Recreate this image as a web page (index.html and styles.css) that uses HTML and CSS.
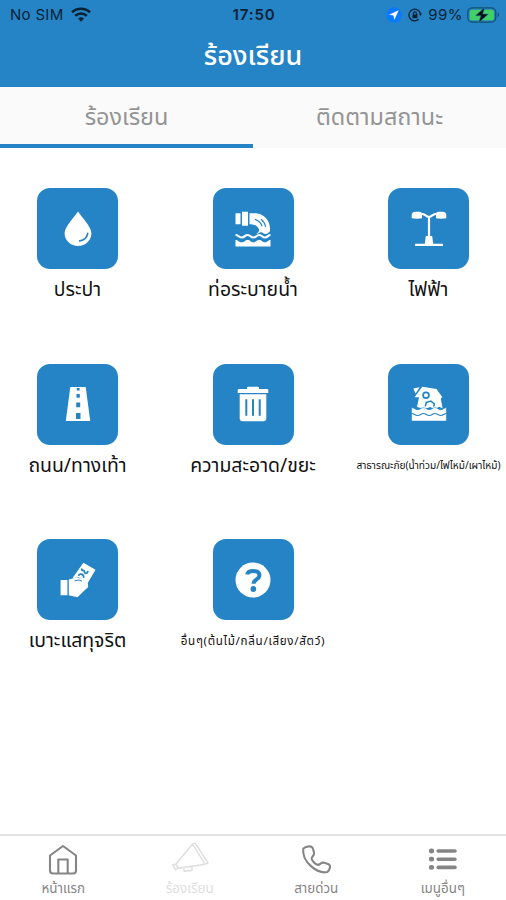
FILE: index.html
```html
<!DOCTYPE html>
<html lang="th">
<head>
  <meta charset="UTF-8">
  <meta name="viewport" content="width=device-width, initial-scale=1.0">
  <title>ร้องเรียน</title>
  <link rel="stylesheet" href="styles.css">
</head>
<body>
  <header class="header">
    <div class="status-bar">
      <div class="status-left">
        <span>No SIM</span>
        <svg width="20" height="15" viewBox="0 0 20 15" fill="none" stroke="#0b2234" stroke-width="2.6">
          <path d="M1 5.3a13 13 0 0 1 18 0M4.2 8.9a8.3 8.3 0 0 1 11.6 0"/>
          <path d="M7 11.6a4.5 4.5 0 0 1 6 0L10 14.8z" fill="#0b2234" stroke="none"/>
        </svg>
      </div>
      <span class="clock">17:50</span>
      <div class="status-right">
        <svg width="16" height="16" viewBox="0 0 16 16"><circle cx="8" cy="8" r="7.7" fill="#0a78ff"/><path d="M12.7 3.3L3 7.7l4.5.8.8 4.6z" fill="#fff"/></svg>
        <svg class="lock" width="14" height="14" viewBox="0 0 14 14" fill="none" stroke="#0b2234" stroke-width="1.3">
          <path d="M10.7 11.3A5.8 5.8 0 1 1 12.5 6"/><path d="M10.8 5.5h3.1l-1.4 2.7z" fill="#0b2234" stroke="none"/>
          <path d="M4.5 6.5h5v3.7h-5z" fill="#0b2234" stroke="none"/><path d="M5.5 7V5.4a1.5 1.5 0 0 1 3 0V7"/>
        </svg>
        <span class="percent">99%</span>
        <svg width="33" height="16" viewBox="0 0 33 16">
          <rect x=".8" y=".8" width="28" height="14.4" rx="4.4" fill="none" stroke="#174e72" stroke-width="1.3"/>
          <rect x="2.7" y="2.7" width="24.2" height="10.6" rx="2.6" fill="#42cf63"/>
          <path d="M30.7 5.8c1.8.6 1.8 3.8 0 4.4z" fill="#174e72"/>
          <path d="M17.8.3L8.4 8.7h5.3l-2 7L21.5 7h-5.7z" fill="#071018" stroke="#238ac0" stroke-width=".5"/>
        </svg>
      </div>
    </div>
    <h1>ร้องเรียน</h1>
  </header>

  <nav class="tabs">
    <a class="tab active">ร้องเรียน</a>
    <a class="tab">ติดตามสถานะ</a>
  </nav>

  <main class="menu-grid">
    <div class="menu-item">
      <div class="tile">
        <svg viewBox="0 0 36 36" fill="#fff"><path d="M18 .5C15 5.5 4.6 15.4 4.6 22.2a13.4 12.8 0 0 0 26.8 0C31.4 15.4 21 5.5 18 .5z"/><path d="M27.7 22.4c-.7 4.2-3.3 6.8-8 7.5" fill="none" stroke="#2584c6" stroke-width="1.7" stroke-linecap="round"/></svg>
      </div>
      <p>ประปา</p>
    </div>
    <div class="menu-item">
      <div class="tile">
        <svg viewBox="0 0 36 36" fill="#fff">
          <path d="M.5 2.2h5v11h-5zM7 .8h6v14H7zM14.5 2.2h6.3C29 3 34.8 9 35 17.5v2.7c-1.2 1-2.5 2.7-4.3 2.7-2.2 0-3-1.5-4.5-1.7-2.1-.2-2.5 1.8-4.8 1.4 3-1.5 3.2-3.3 2.2-5.1-1.5-3-4.3-4.2-9.1-4.3z"/>
          <path d="M20 8.4c4 1.2 6.2 3.7 7 7M26 8.2c2.2 1.7 4 4.3 4.8 7.8" fill="none" stroke="#2584c6" stroke-width="1.1"/>
          <path d="M.5 24c3.1 0 3.1 2.5 6.2 2.5S9.8 24 12.6 24s3 2.5 5.8 2.5 3-2.5 5.8-2.5 3 2.5 5.8 2.5 3-2.5 5.5-2.5" fill="none" stroke="#fff" stroke-width="2.2"/>
          <path d="M.5 29c3 0 3 2.3 6.2 2.3S9.8 29 12.6 29s3 2.3 5.8 2.3 3-2.3 5.8-2.3 3 2.3 5.8 2.3 3-2.3 5.5-2.3v6.6H.5z"/>
        </svg>
      </div>
      <p>ท่อระบายน้ำ</p>
    </div>
    <div class="menu-item">
      <div class="tile">
        <svg viewBox="0 0 36 36" fill="#fff"><path d="M.7 7.3V4Q1 .7 4.5.7h4Q11 .7 11 3v4.3q-5 .8-10.3 0zM35.3 7.3V4Q35 .7 31.5.7h-4Q25 .7 25 3v4.3q5 .8 10.3 0z"/><path d="M10.5 2.8c3.5 0 4.3 2.7 7.5 3.3 3.2-.6 4-3.3 7.5-3.3M18 5.8V25" fill="none" stroke="#fff" stroke-width="2.2"/><path d="M14.8 25h6.4l1 7.7H32V35H4v-2.3h9.8z"/></svg>
      </div>
      <p>ไฟฟ้า</p>
    </div>
    <div class="menu-item">
      <div class="tile">
        <svg viewBox="0 0 36 36"><path d="M10.3 1h15.4l4.5 34H5.8z" fill="#fff"/><path d="M16.8 1.9h2.8v2.7h-2.8zM16.5 8h3.3v3.7h-3.3zM16.2 16.4h4v4.8h-4zM16 27h4.5v6H16z" fill="#2584c6"/></svg>
      </div>
      <p>ถนน/ทางเท้า</p>
    </div>
    <div class="menu-item">
      <div class="tile">
        <svg viewBox="0 0 36 36"><path d="M12 3V1.8Q12 .7 13.3.7h9.4q1.3 0 1.3 1.1V3h8q1.3 0 1.3 1.3V7H2.7V4.3Q2.7 3 4 3z" fill="#fff"/><path d="M4.7 8.3h26.6v23.9q0 3-3 3H7.7q-3 0-3-3z" fill="#fff"/><path d="M11.3 13.3v16.4M18 13.3v16.4M24.7 13.3v16.4" stroke="#2584c6" stroke-width="2"/></svg>
      </div>
      <p>ความสะอาด/ขยะ</p>
    </div>
    <div class="menu-item">
      <div class="tile">
        <svg viewBox="0 0 36 36" fill="#fff">
          <path d="M2.3 2.6L8.6 1.2l-4 6.3zM3.5 11.3L11.3.8 25.5 3l5.7 8-1.4 1.7 1.8 9.8-3.2-1.8-4.7 2.3-4.6-2-5.5 2-7.6-2 2-9.7z"/>
          <circle cx="15" cy="9.2" r="2.9" fill="none" stroke="#2584c6" stroke-width="1.7"/><path d="M14.3 20.4l1-4 4.5-1.3 3.6 2.9-.9 2.6" fill="none" stroke="#2584c6" stroke-width="1.6"/>
          <path d="M.6 21.7c3 0 3 2 6 2s3-2 5.8-2 3 2 5.8 2 3-2 5.8-2 3 2 5.8 2 3-2 5.6-2v13.4H.6z" stroke="#2584c6" stroke-width=".6"/>
          <path d="M.6 27.5c3 0 3 2 6 2s3-2 5.8-2 3 2 5.8 2 3-2 5.8-2 3 2 5.8 2 3-2 5.6-2" fill="none" stroke="#2584c6" stroke-width="1.2"/>
        </svg>
      </div>
      <p class="small">สาธารณะภัย(น้ำท่วม/ไฟไหม้/เผาไหม้)</p>
    </div>
    <div class="menu-item">
      <div class="tile">
        <svg viewBox="0 0 36 36" fill="#fff">
          <path d="M23.4.7l12.1 7-8.2 14.1-4.6-4-4.2-2.5-6.1.9z"/><path d="M18.3 13.7c2-3.3 6.5-.8 5.1 2.1M22 6.5c-.8 3 1.3 1.2 2.2 2.4.7 1-.3 2 1 2.3 1.5.5 2.5-.8 2.8-2.3" fill="none" stroke="#2584c6" stroke-width="1.8"/>
          <path d="M.6 18h6.8v15.3H.6zM8.8 17.6l7.5-2.1 6.3 1.4 5.2 4.1.4 4-6.4 6-4.3 4.2-8.7-1.9z"/><path d="M14.5 18.8l4.5-.8 3 1.2" fill="none" stroke="#2584c6" stroke-width="1"/>
        </svg>
      </div>
      <p>เบาะแสทุจริต</p>
    </div>
    <div class="menu-item">
      <div class="tile">
        <svg viewBox="0 0 36 36"><circle cx="18" cy="18" r="17.5" fill="#fff"/><path d="M12.2 12.5c.8-4.5 11.7-5 12.2.5.4 4.5-5.8 4.3-5.8 8.7" fill="none" stroke="#2584c6" stroke-width="4"/><circle cx="18.4" cy="27" r="2.9" fill="#2584c6"/></svg>
      </div>
      <p class="small wide">อื่นๆ(ต้นไม้/กลิ่น/เสียง/สัตว์)</p>
    </div>
  </main>

  <footer class="bottom-nav">
    <a class="nav-item">
      <svg viewBox="0 0 34 34" fill="none" stroke="#858585" stroke-width="2.1" stroke-linejoin="round"><path d="M4 13.5L17 4l13 9.5v15q0 3-3 3H7q-3 0-3-3z"/><path d="M12.3 31V17.5h9.4V31"/></svg>
      <span>หน้าแรก</span>
    </a>
    <a class="nav-item current">
      <svg class="horn" viewBox="0 0 38 34" fill="none" stroke="#dedede" stroke-width="1.4" stroke-linejoin="round"><path d="M21.5 2l2.8-.6L37 21l-3 1.2zM21.5 2L4.8 22.2l2.2 4L34 22.2M4.8 22.2L1.6 23l2.7 4.6 2.7-1.4M13 25.5v3.8l8-.8V24.4"/></svg>
      <span>ร้องเรียน</span>
    </a>
    <a class="nav-item">
      <svg viewBox="0 0 34 34" fill="none" stroke="#858585" stroke-width="2.1" stroke-linejoin="round"><path d="M4.3 6.5C7.5 4 12.3 3.5 13.7 6l1.4 4.7c.5 2.7-2.9 4.2-2.4 6.1.7 2.4 3.4 5 5.7 6 2.1.7 3.4-2.5 6-2.2l5.3 1.7c2.4 1.4 1.3 5.4-1.4 7.7C19.5 32.1 2.4 20.8 4.3 6.5z"/></svg>
      <span>สายด่วน</span>
    </a>
    <a class="nav-item">
      <svg viewBox="0 0 34 34" stroke="#858585" stroke-width="3.6" stroke-linecap="round"><path d="M5.2 9h.6M5.2 17.2h.6M5.2 25.4h.6" stroke-width="4.8"/><path d="M12.2 9H29M12.2 17.2H29M12.2 25.4H29"/></svg>
      <span>เมนูอื่นๆ</span>
    </a>
  </footer>
</body>
</html>
```
FILE: styles.css
```css
* {
  box-sizing: border-box;
}
body {
  display: flex;
  flex-direction: column;
  height: 100vh;
  margin: 0;
  overflow: hidden;
  background-color: #fff;
  font-family: "Noto Sans Thai", "Noto Sans", "Open Sans", sans-serif;
}
.header {
  height: 87px;
  background-color: #2584c6;
}
.status-bar {
  display: grid;
  grid-template-columns: 1fr auto 1fr;
  align-items: center;
  height: 29px;
  padding: 0 6px 0 10px;
  color: #0b2234;
  font-family: Inter, sans-serif;
  font-size: 15px;
}
.status-left, .status-right {
  display: flex;
  align-items: center;
  gap: 7px;
}
.status-left {
  letter-spacing: 0.3px;
}
.status-right {
  justify-content: flex-end;
  gap: 5px;
}
.clock {
  padding-right: 2px;
  font-weight: 600;
  letter-spacing: 0.9px;
}
.percent {
  margin-right: -1px;
  letter-spacing: 0.5px;
}
.lock {
  margin: 0 1px;
}
h1 {
  margin: 0;
  color: #fff;
  font-size: 27px;
  font-weight: 500;
  line-height: 56px;
  text-align: center;
}
.tabs {
  display: flex;
  height: 61px;
  background-color: #fafafa;
}
.tab {
  flex: 1;
  color: #949494;
  font-size: 23.4px;
  line-height: 62px;
  text-align: center;
}
.tab.active {
  border-bottom: 4px solid #2584c6;
}
.menu-grid {
  display: grid;
  grid-template-columns: repeat(3, 175.5px);
  grid-auto-rows: 175.5px;
  justify-content: center;
  align-content: start;
  flex: 1;
  padding-top: 40px;
}
.menu-item {
  display: flex;
  flex-direction: column;
  align-items: center;
}
.tile {
  display: flex;
  align-items: center;
  justify-content: center;
  width: 81px;
  height: 81px;
  border-radius: 13px;
  background-color: #2584c6;
}
.tile svg {
  width: 36px;
  height: 36px;
}
.menu-item p {
  margin: 0;
  color: #111;
  font-size: 19.4px;
  line-height: 42px;
  white-space: nowrap;
}
.menu-item .small {
  font-size: 10.1px;
  line-height: 43px;
}
.menu-item .wide {
  font-size: 11.6px;
  letter-spacing: 0.7px;
}
.bottom-nav {
  display: flex;
  height: 66px;
  border-top: 2px solid #e3e3e3;
}
.nav-item {
  display: flex;
  flex: 1;
  flex-direction: column;
  align-items: center;
  padding-top: 6px;
  color: #858585;
  font-size: 13.4px;
}
.nav-item svg {
  flex-shrink: 0;
  width: 34px;
  height: 34px;
}
.nav-item .horn {
  width: 38px;
}
.nav-item span {
  line-height: 26px;
}
.nav-item.current {
  color: #dedede;
}
```
